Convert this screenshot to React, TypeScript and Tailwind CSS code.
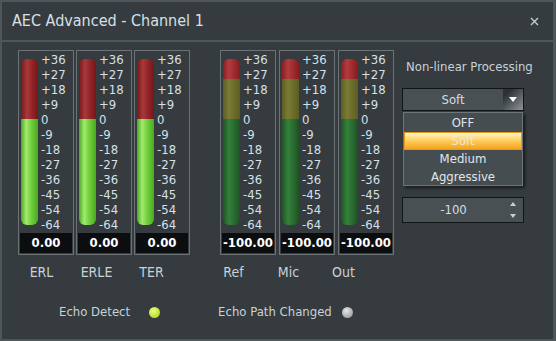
import React from "react";

const FONT = "font-['DejaVu_Sans_Condensed','Liberation_Sans',sans-serif]";
const LABELS = ["+36", "+27", "+18", "+9", "0", "-9", "-18", "-27", "-36", "-45", "-54", "-64"];

function Meter({ kind, value }: { kind: "a" | "b"; value: string }) {
  return (
    <div className="w-[56px] h-[205px] border border-[#6b7376] flex flex-col">
      <div className="flex h-[182px]">
        <div className="ml-[2px] mt-[8px] w-[17px] h-[166px] rounded-[6px] overflow-hidden flex flex-col">
          {kind === "a" ? (
            <>
              <div className="h-[60px] bg-[linear-gradient(to_right,#7a1618,#a8383b_35%,#8e2225_70%,#76161a)]" />
              <div className="flex-1 bg-[linear-gradient(to_right,#4aa822,#a2ea70_30%,#72d03c_60%,#4aa822)]" />
            </>
          ) : (
            <>
              <div className="h-[20px] bg-[linear-gradient(to_right,#8a1e22,#b23c40_35%,#9a2a2d_70%,#861c20)]" />
              <div className="h-[40px] bg-[linear-gradient(to_right,#5d5e24,#7a7b34_35%,#6a6b2a_70%,#5b5c22)]" />
              <div className="flex-1 bg-[linear-gradient(to_right,#1f5526,#34803c_35%,#28692f_70%,#1d5224)]" />
            </>
          )}
        </div>
        <div className="ml-[3px] pt-[1px] flex flex-col text-[13px] leading-[15px] text-[#d6e0e8]">
          {LABELS.map((l) => (
            <span key={l} className="h-[15px]">
              {l}
            </span>
          ))}
        </div>
      </div>
      <div className="mx-[1px] h-[20px] bg-[#0b0d0e] text-white text-[13px] font-semibold flex items-center justify-center">
        {value}
      </div>
    </div>
  );
}

export default function App() {
  return (
    <div
      className={`${FONT} w-[556px] h-[341px] bg-[#353b3e] border-l-2 border-t-2 border-b-2 border-r-[3px] border-[#4e5659] flex flex-col overflow-hidden`}
    >
      {/* title bar */}
      <div className="h-[38px] flex items-center pl-[10px] pr-[14px] shrink-0">
        <span className="text-[16px] text-[#d8e0e6]">AEC Advanced - Channel 1</span>
        <svg className="ml-auto" width="9" height="9" viewBox="0 0 9 9">
          <path d="M1 1 L8 8 M8 1 L1 8" stroke="#c4ccd0" strokeWidth="1.4" />
        </svg>
      </div>
      <div className="h-[2px] bg-[#4e5659] shrink-0" />

      {/* main */}
      <div className="flex pt-[8px] pl-[16px] shrink-0">
        <div className="flex gap-[2px]">
          <Meter kind="a" value="0.00" />
          <Meter kind="a" value="0.00" />
          <Meter kind="a" value="0.00" />
        </div>
        <div className="flex gap-[3px] ml-[30px]">
          <Meter kind="b" value="-100.00" />
          <Meter kind="b" value="-100.00" />
          <Meter kind="b" value="-100.00" />
        </div>

        {/* right panel */}
        <div className="ml-[8px] w-[122px] flex flex-col relative">
          <div className="mt-[9px] ml-[4px] text-[13px] leading-[16px] text-[#c8d2d8] whitespace-nowrap">
            Non-linear Processing
          </div>
          <div className="mt-[13px] h-[23px] border border-[#121516] bg-[#495054] flex">
            <div className="flex-1 flex items-center justify-center text-[13px] text-[#d4dde2]">Soft</div>
            <div className="w-[20px] flex items-center justify-center bg-[linear-gradient(135deg,#2c3134_20%,#8e9598_100%)]">
              <svg width="8" height="5" viewBox="0 0 8 5">
                <path d="M0 0 L8 0 L4 5 Z" fill="#ffffff" />
              </svg>
            </div>
          </div>

          {/* dropdown list overlay */}
          <div className="absolute left-[1px] top-[62px] w-[120px] h-[74px] bg-[#464d51] border border-[#6e7679] shadow-[2px_2px_3px_rgba(0,0,0,0.55)] flex flex-col pt-[1px] text-[13px] text-[#e0e7ec] z-10">
            <div className="h-[18px] flex items-center justify-center">OFF</div>
            <div className="h-[18px] flex items-center justify-center border border-[#e59a1c] bg-[linear-gradient(to_bottom,#fff6d0,#ffd060_45%,#f6a31e)] text-[#ece6d6]">
              Soft
            </div>
            <div className="h-[18px] flex items-center justify-center">Medium</div>
            <div className="h-[18px] flex items-center justify-center">Aggressive</div>
          </div>

          <div className="mt-[86px] h-[26px] border border-[#121516] bg-[#495054] flex items-center">
            <div className="flex-1 text-center pl-[1px] text-[13px] text-[#d4dde2]">-100</div>
            <div className="w-[20px] h-full flex flex-col items-center justify-between py-[4px]">
              <svg width="6" height="4" viewBox="0 0 6 4">
                <path d="M0 4 L6 4 L3 0 Z" fill="#c8cfd2" />
              </svg>
              <svg width="6" height="4" viewBox="0 0 6 4">
                <path d="M0 0 L6 0 L3 4 Z" fill="#c8cfd2" />
              </svg>
            </div>
          </div>
        </div>
      </div>

      {/* channel labels */}
      <div className="flex pl-[12px] mt-[8px] text-[14px] leading-[18px] text-[#c8d2d8]">
        <div className="w-[55px] text-center">ERL</div>
        <div className="w-[55px] text-center">ERLE</div>
        <div className="w-[55px] text-center">TER</div>
        <div className="w-[27px]" />
        <div className="w-[55px] text-center">Ref</div>
        <div className="w-[55px] text-center">Mic</div>
        <div className="w-[55px] text-center">Out</div>
      </div>

      {/* indicators */}
      <div className="flex items-center mt-[22px] pl-[57px] text-[13px] leading-[18px] text-[#c8d2d8]">
        <span>Echo Detect</span>
        <span className="ml-[19px] w-[11px] h-[11px] rounded-full bg-[radial-gradient(circle_at_40%_35%,#eaff8a,#c6e43a_55%,#9ab820)]" />
        <span className="ml-[58px]">Echo Path Changed</span>
        <span className="ml-[10px] w-[11px] h-[11px] rounded-full bg-[radial-gradient(circle_at_40%_35%,#e8e8e8,#b4b4b4_55%,#8c8c8c)]" />
      </div>
    </div>
  );
}
